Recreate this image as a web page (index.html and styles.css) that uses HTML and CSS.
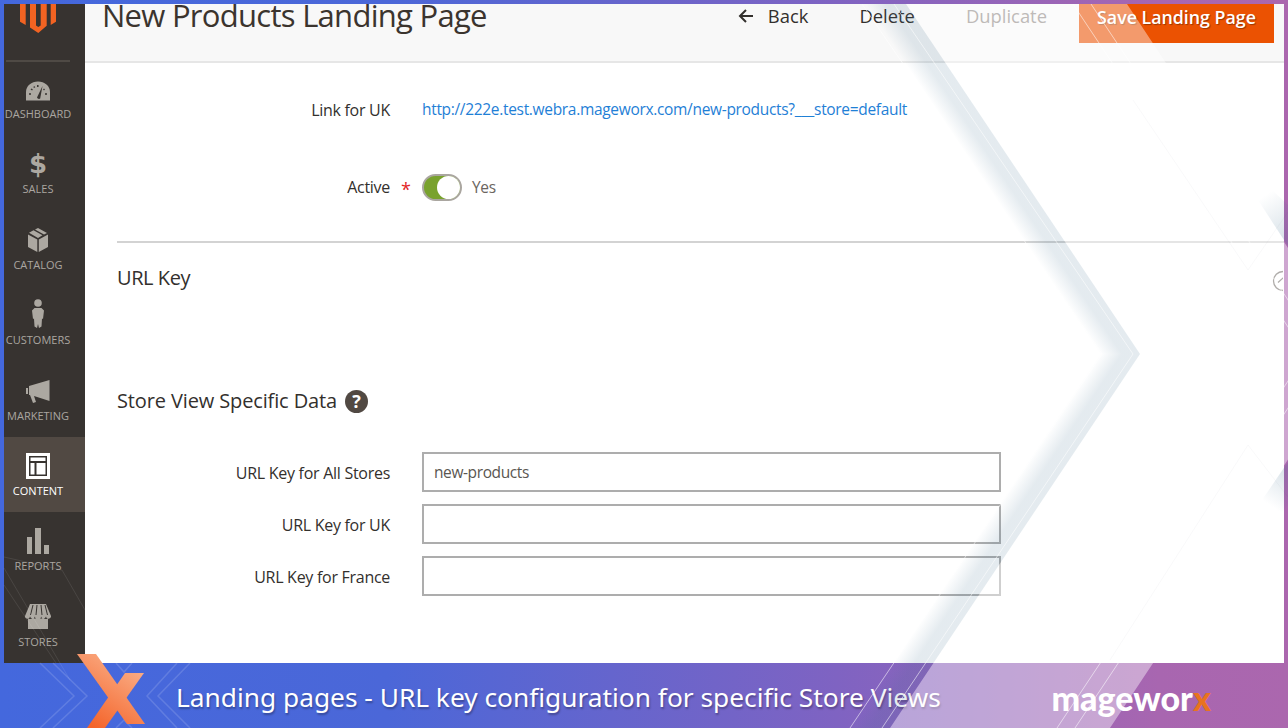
FILE: index.html
```html
<!DOCTYPE html>
<html lang="en">
<head>
<meta charset="utf-8">
<title>New Products Landing Page</title>
<link rel="stylesheet" href="styles.css">
</head>
<body>
<div class="stage">
  <div class="app">
    <aside class="sidebar">
      <div class="logo">
        <svg class="logo-svg" width="41" height="33" viewBox="18 0 41 33"><path class="logo-fill" d="M20 4h5.7v21L20 21.8zM30 4h6v21.5l2.3 1.5 2.4-1.5V4h6v21.8L38.3 33 30 27.5zM50.7 4H56v17.8L50.7 25z"/></svg>
      </div>
      <nav class="nav">
        <a class="nav-item">
          <span class="nav-icon"><svg class="ico-gauge" width="26" height="20" viewBox="0 0 26 20"><path class="ico" d="M1 19.5V11a12 10.5 0 0 1 24 0v8.500z"/><path class="ico-cut" d="M12 16.500 17.500 5l-2.300 12.500a2 2 0 0 1-3.200-1z"/><path class="ico-dots" d="M4 13h2M6 8l1.500 1M12.800 4v2M9 5.500l.6 1.200M20 13h2M19.500 8l-1 .8"/></svg></span>
          <span class="nav-label">Dashboard</span>
        </a>
        <a class="nav-item">
          <span class="nav-icon"><span class="dollar">$</span></span>
          <span class="nav-label">Sales</span>
        </a>
        <a class="nav-item">
          <span class="nav-icon"><svg width="22" height="26" viewBox="0 0 22 26"><path class="ico" d="M1 7.500 10.300 12.500V25L1 20zM21 7.500 11.800 12.500V25L21 20zM11 1l9 5-3 1.600-9-5zM6.500 3.300l9 5-4.500 2.700-9-5.200z"/></svg></span>
          <span class="nav-label">Catalog</span>
        </a>
        <a class="nav-item">
          <span class="nav-icon"><svg class="ico-person" width="14" height="30" viewBox="0 0 14 30"><circle class="ico" cx="7" cy="4" r="3.800"/><path class="ico" d="M3.500 9h7l2.500 2.500-1 8.500-1-.5-.5 8-2.500 1.500L7 25l-1 4-2.500-1.500-.5-8-1 .5-1-8.500z"/></svg></span>
          <span class="nav-label">Customers</span>
        </a>
        <a class="nav-item">
          <span class="nav-icon"><svg width="24" height="24" viewBox="0 0 24 24"><path class="ico" d="M23.500 1v21L8 17l2 6-3 1-3-8H3V7zM0 9h2v6H0z"/></svg></span>
          <span class="nav-label">Marketing</span>
        </a>
        <a class="nav-item is-active">
          <span class="nav-icon"><svg width="24" height="28" viewBox="0 0 24 28"><path class="ico-white" d="M0 1h24v26H0z"/><path class="ico-panel" d="M3 4h18v20H3z"/><path class="ico-white" d="M4.500 5.500h15v3.500h-15zM4.500 11h4v11.500h-4zM10.500 11h9v11.500h-9z"/></svg></span>
          <span class="nav-label">Content</span>
        </a>
        <a class="nav-item">
          <span class="nav-icon"><svg width="22" height="26" viewBox="0 0 22 26"><path class="ico" d="M0 9h5v17H0zM8 0h6v26H8zM17 17h5v9h-5z"/></svg></span>
          <span class="nav-label">Reports</span>
        </a>
        <a class="nav-item">
          <span class="nav-icon"><svg width="26" height="25" viewBox="0 0 26 25"><path class="ico" d="M5 0h16l5 12a2.500 2.500 0 0 1-5 .5 2.600 2.600 0 0 1-5 0 2.700 2.700 0 0 1-6 0 2.600 2.600 0 0 1-5 0 2.500 2.500 0 0 1-5-.5zM3 14.500c2 1 3.500.500 5-.5 1.500 1 3.500 1 5 0 1.500 1 3.500 1 5 0 1.500 1 3 1.500 5 .5V25H3z"/><path class="ico-line" d="M8 1 5.500 11M12 1l-1 10M16 1l1 10M20 1l2.500 10"/></svg></span>
          <span class="nav-label">Stores</span>
        </a>
      </nav>
    </aside>
    <main class="main">
      <header class="page-head">
        <h1 class="page-title">New Products Landing Page</h1>
        <div class="actions">
          <a class="action action-back"><svg class="back-arrow" width="15" height="14" viewBox="0 0 15 14"><path d="M15 7H2M8 1 2 7l6 6"/></svg>Back</a>
          <a class="action action-delete">Delete</a>
          <a class="action action-duplicate">Duplicate</a>
          <a class="save-button">Save Landing Page</a>
        </div>
      </header>
      <section class="form">
        <div class="row row-link">
          <span class="label">Link for UK</span>
          <a class="link">http://222e.test.webra.mageworx.com/new-products?___store=default</a>
        </div>
        <div class="row row-active">
          <span class="label label-req">Active</span>
          <span class="switch"><span class="knob"></span></span>
          <span class="switch-text">Yes</span>
        </div>
        <div class="section-head">
          <h2 class="section-title section-title-short">URL Key</h2>
          <span class="collapse"><svg width="22" height="22" viewBox="0 0 22 22"><circle cx="11" cy="11" r="9.500"/><path d="M6 12.500 11 8l5 4.500"/></svg></span>
        </div>
        <div class="store-head">
          <h2 class="section-title">Store View Specific Data</h2>
          <span class="help">?</span>
        </div>
        <div class="fields">
          <label class="row row-field"><span class="label">URL Key for All Stores</span><input class="input" type="text" value="new-products"></label>
          <label class="row row-field"><span class="label">URL Key for UK</span><input class="input" type="text"></label>
          <label class="row row-field"><span class="label">URL Key for France</span><input class="input" type="text"></label>
        </div>
      </section>
    </main>
  </div>
  <footer class="banner">
    <p class="banner-title">Landing pages - URL key configuration for specific Store Views</p>
    <p class="brand">magewor<span class="brand-x">x</span></p>
  </footer>
  <svg class="overlay" width="1288" height="728" viewBox="0 0 1288 728">
    <defs>
      <linearGradient id="bandUp" gradientUnits="userSpaceOnUse" x1="1112.4" y1="372.5" x2="1127.6" y2="362.3">
        <stop offset="0" stop-color="#3f6f8f" stop-opacity="0"/><stop offset="1" stop-color="#3f6f8f" stop-opacity=".14"/>
      </linearGradient>
      <linearGradient id="bandDown" gradientUnits="userSpaceOnUse" x1="1112.4" y1="335.5" x2="1127.6" y2="345.7">
        <stop offset="0" stop-color="#3f6f8f" stop-opacity="0"/><stop offset="1" stop-color="#3f6f8f" stop-opacity=".14"/>
      </linearGradient>
      <linearGradient id="sideUp" gradientUnits="userSpaceOnUse" x1="1258" y1="200" x2="1284" y2="240">
        <stop offset="0" stop-color="#3f6f8f" stop-opacity="0"/><stop offset="1" stop-color="#3f6f8f" stop-opacity=".2"/>
      </linearGradient>
      <linearGradient id="sideDown" gradientUnits="userSpaceOnUse" x1="1262" y1="500" x2="1284" y2="467">
        <stop offset="0" stop-color="#3f6f8f" stop-opacity="0"/><stop offset="1" stop-color="#3f6f8f" stop-opacity=".2"/>
      </linearGradient>
      <linearGradient id="xGrad" gradientUnits="userSpaceOnUse" x1="140" y1="660" x2="95" y2="728">
        <stop offset="0" stop-color="#fbb48e"/><stop offset="1" stop-color="#f4642a"/>
      </linearGradient>
    </defs>
    <path class="veil" d="M906 4 1140 354 890 728H1110L1358 354 1127 4z"/>
    <path fill="url(#bandUp)" d="M906 4 1140 354H1100L866 4z"/>
    <path fill="url(#bandDown)" d="M1140 354 890 728H850L1100 354z"/>
    <path fill="url(#sideUp)" d="M1258 200 1284 240 1288 246V205L1272 190z"/>
    <path fill="url(#sideDown)" d="M1288 462 1262 500 1275 520 1288 505z"/>
    <path class="thin" d="M894 4 1133 354 882 728M862 4 1102 354 850 728M1091 4 1324 354 1075 728M1073 4 1306 354 1057 728"/>
    <path class="faint" d="M1133 100 1248 270 1288 212M1288 497 1248 445 1110 660"/>
    <path class="deco" d="M53 663 87 696 53 728M40 663 74 696 40 728M177 663 147 696 177 728M190 663 158 696 190 728M116 663 124 672 132 663M116 728 124 720 132 728"/>
    <path class="deco-dark" d="M4 557 62 570 85 610M4 568 70 680M4 585 56 663"/>
    <path fill="url(#xGrad)" d="M77 654H96L145 724H127z"/>
    <path fill="url(#xGrad)" d="M125 673H144L105 728H87z"/>
  </svg>
</div>
</body>
</html>
```
FILE: styles.css
```css
* { box-sizing: border-box; }
html, body { margin: 0; padding: 0; }
body { width: 1288px; height: 728px; overflow: hidden; font-family: "Open Sans", "Noto Sans", sans-serif; color: #33302d; }
.stage { position: relative; width: 1288px; height: 728px; overflow: hidden; display: flex; flex-direction: column; background: linear-gradient(90deg, #4468dd 0%, #4b67d8 30%, #7f63c2 65%, #a866b0 90%, #ab67ae 100%); }
.app { display: flex; height: 659px; margin-top: 4px; padding: 0 4px; flex: none; }

.sidebar { width: 81px; flex: none; background: #373330; display: flex; flex-direction: column; overflow: hidden; }
.logo { height: 58px; flex: none; margin: 0 15px 0 2px; border-bottom: 2px solid #4f4a45; }
.logo-svg { display: block; margin: -4px 0 0 12px; }
.logo-fill { fill: #f26322; }
.nav { display: flex; flex-direction: column; margin-top: -2px; }
.nav-item { height: 75.400px; flex: none; padding-right: 13px; display: flex; flex-direction: column; align-items: center; color: #aaa6a0; }
.nav-item.is-active { background: #514943; color: #fff; }
.nav-icon { height: 32px; margin-top: 13px; display: flex; align-items: center; justify-content: center; }
.nav-label { font-size: 11px; line-height: 14px; text-transform: uppercase; margin-top: 2px; white-space: nowrap; }
.ico-gauge { margin-top: 4px; }
.ico-person { margin-bottom: 3px; }
.ico { fill: #aca8a1; }
.ico-cut { fill: #373330; }
.ico-dots { stroke: #373330; stroke-width: 1.500; fill: none; }
.ico-line { stroke: #373330; stroke-width: 1; fill: none; }
.ico-white { fill: #fff; }
.ico-panel { fill: #373330; }
.dollar { font-family: "DejaVu Sans", sans-serif; font-weight: 700; font-size: 26px; line-height: 32px; color: #aca8a1; }

.main { flex: 1; min-width: 0; background: #fff; display: flex; flex-direction: column; }
.page-head { height: 59px; flex: none; background: #f8f8f8; border-bottom: 2px solid #e6e6e6; display: flex; align-items: flex-start; padding-left: 17px; overflow: hidden; }
.page-title { margin: -13px 0 0; font-size: 31px; letter-spacing: -.72px; line-height: 48px; font-weight: 400; color: #3b342e; white-space: nowrap; }
.actions { margin-left: auto; margin-right: 10px; display: flex; align-items: flex-start; }
.action { font-size: 18.400px; line-height: 24px; margin-top: 0; color: #33302d; white-space: nowrap; font-weight: 500; }
.action-back { display: flex; align-items: center; margin-right: 51px; }
.back-arrow { margin-right: 15px; margin-left: 1px; fill: none; stroke: #33302d; stroke-width: 2; }
.action-delete { margin-right: 51px; }
.action-duplicate { color: #8f8985; margin-right: 32px; }
.save-button { width: 195px; height: 39px; background: #eb5202; color: #fff; font-size: 17.800px; font-weight: 600; line-height: 26px; text-align: center; text-shadow: 1px 1px 1px rgba(0,0,0,.35); white-space: nowrap; }

.form { padding-left: 32px; }
.row { display: grid; grid-template-columns: 273px auto auto 1fr; column-gap: 32px; align-items: center; }
.label { font-size: 16px; letter-spacing: -.28px; line-height: 22px; text-align: right; color: #33302d; font-weight: 500; white-space: nowrap; }
.row-link { margin-top: 34px; height: 22px; }
.row-link .label, .row-field .label { margin-top: 2px; }
.link { font-size: 15.500px; letter-spacing: -.32px; line-height: 22px; color: #1f80d6; white-space: nowrap; }
.row-active { margin-top: 54px; height: 28px; }
.label-req { position: relative; }
.label-req::after { content: "*"; position: absolute; left: 284px; top: 2px; color: #e22626; font-size: 18px; }
.switch { width: 40px; height: 27px; border-radius: 14px; background: #79a22e; border: 2px solid #aaa6a0; display: block; position: relative; }
.knob { position: absolute; right: 0; top: 0; width: 23px; height: 23px; border-radius: 50%; background: #fff; }
.switch-text { font-size: 15.500px; letter-spacing: -.3px; color: #6b6560; margin-left: -22px; }
.section-head { margin-top: 40px; border-top: 2px solid #d3d3d3; height: 80px; display: flex; justify-content: space-between; padding-top: 19px; overflow: hidden; position: relative; }
.section-title { margin: 0; font-size: 20px; letter-spacing: -.13px; line-height: 32px; font-weight: 500; color: #33302d; white-space: nowrap; }
.section-title-short { letter-spacing: -.43px; }
.collapse { position: absolute; left: 1155px; top: 27px; width: 11px; overflow: hidden; }
.collapse svg { fill: none; stroke: #77726d; stroke-width: 1.300; display: block; }
.store-head { margin-top: 64px; display: flex; align-items: center; gap: 8px; }
.help { width: 23px; height: 23px; border-radius: 50%; background: #514943; color: #fff; font-size: 18px; font-weight: 700; line-height: 23px; text-align: center; }
.fields { margin-top: 35px; display: flex; flex-direction: column; gap: 12px; }
.row-field { grid-template-columns: 273px 579px 1fr; height: 40px; }
.input { width: 579px; height: 40px; border: 2px solid #adadad; padding: 0 10px; font: 400 15.500px "Open Sans", sans-serif; letter-spacing: -.4px; color: #5a5651; background: transparent; outline: none; }

.banner { flex: 1; display: flex; align-items: center; padding: 3px 77px 0 176px; }
.banner-title { margin: 0; font-size: 26.300px; font-family: "Noto Sans", sans-serif; color: #fff; text-shadow: 1px 2px 2px rgba(0,0,0,.3); white-space: nowrap; }
.brand { margin: 0 0 0 auto; font-family: Lato, sans-serif; font-weight: 900; font-size: 34px; color: #fff; white-space: nowrap; }
.brand-x { color: #e8731f; }

.overlay { position: absolute; left: 0; top: 0; pointer-events: none; }
.veil { fill: rgba(255,255,255,.42); }
.thin { fill: none; stroke: rgba(255,255,255,.55); stroke-width: 1; }
.faint { fill: none; stroke: rgba(60,60,90,.03); stroke-width: 1; }
.deco { fill: none; stroke: rgba(255,255,255,.14); stroke-width: 1.500; }
.deco-dark { fill: none; stroke: rgba(255,255,255,.09); stroke-width: 1; }
```
